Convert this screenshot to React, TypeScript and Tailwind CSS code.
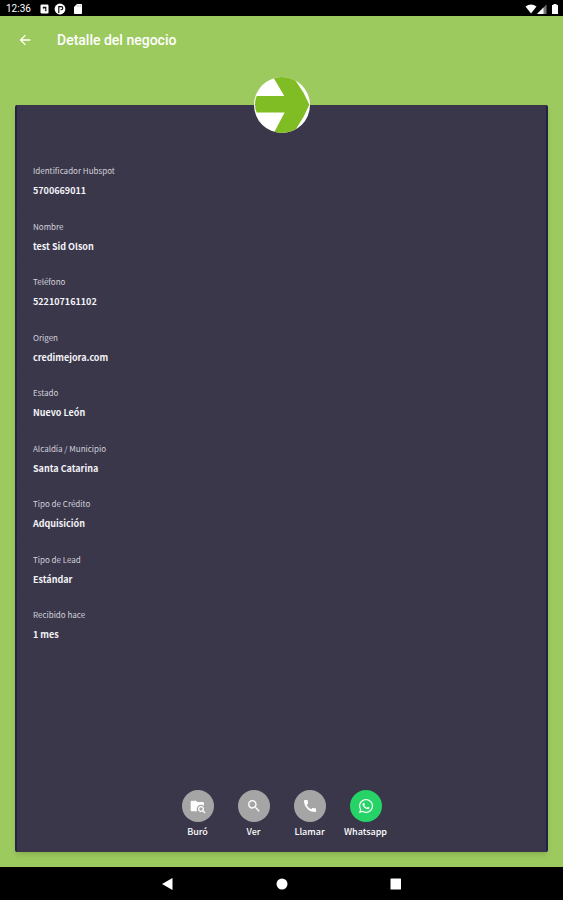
import { clsx } from "clsx";
import type { ReactNode } from "react";
import { FaWhatsapp } from "react-icons/fa";
import { MdArrowBack, MdCall, MdSearch } from "react-icons/md";

type Field = {
  label: string;
  value: string;
};

const fields: Field[] = [
  { label: "Identificador Hubspot", value: "5700669011" },
  { label: "Nombre", value: "test Sid Olson" },
  { label: "Teléfono", value: "522107161102" },
  { label: "Origen", value: "credimejora.com" },
  { label: "Estado", value: "Nuevo León" },
  { label: "Alcaldía / Municipio", value: "Santa Catarina" },
  { label: "Tipo de Crédito", value: "Adquisición" },
  { label: "Tipo de Lead", value: "Estándar" },
  { label: "Recibido hace", value: "1 mes" },
];

function StatusBar() {
  return (
    <div className="flex h-4 items-center justify-between bg-black pl-1.5 pr-1 pt-0.5 text-white">
      <div className="flex items-center">
        <span className="w-8 font-[Roboto,sans-serif] text-[10px] leading-3">
          12:36
        </span>
        <svg viewBox="0 0 10 10" className="ml-0.5 h-2.5 w-2.5" aria-hidden="true">
          <rect x="0.5" y="0.5" width="8" height="9" rx="1.2" fill="#fff" />
          <path d="M2.8 2.8h3.6v4.4H5.6L2.8 4.4z" fill="#111" />
          <circle cx="4.3" cy="5.4" r="1.1" fill="#fff" />
        </svg>
        <svg viewBox="0 0 12 12" className="ml-1 h-3 w-3" aria-hidden="true">
          <circle cx="6" cy="6" r="5.4" fill="#fff" />
          <path
            d="M4.8 10V3.6h2.4a1.6 1.6 0 0 1 0 3.2H6.6"
            fill="none"
            stroke="#000"
            strokeWidth="1.1"
          />
        </svg>
        <svg viewBox="0 0 8 10" className="ml-2 h-2.5 w-2" aria-hidden="true">
          <path d="M3 0h4.2q.8 0 .8.8v8.4q0 .8-.8.8H.8Q0 10 0 9.2V3z" fill="#fff" />
          <path d="M3.2 1.3v1.4M4.8 1.3v1.4M6.4 1.3v1.4" stroke="#888" strokeWidth=".6" />
        </svg>
      </div>
      <div className="flex items-center">
        <svg viewBox="0 0 12 10" className="h-2.5 w-3" aria-hidden="true">
          <path d="M.5 2.6Q6-1.8 11.5 2.6L6 9.5z" fill="#fff" />
        </svg>
        <svg viewBox="0 0 10 10" className="h-2.5 w-2.5" aria-hidden="true">
          <path d="M0 10 9.5.5V10z" fill="#777" />
          <path d="M0 10 6.5 3.5V10z" fill="#fff" />
        </svg>
        <svg viewBox="0 0 8 10" className="ml-1 h-2.5 w-2" aria-hidden="true">
          <path d="M2.5 0h3v1H7v9H1V1h1.5z" fill="#fff" />
        </svg>
      </div>
    </div>
  );
}

function Logo() {
  return (
    <svg viewBox="0 0 170 170" className="h-14 w-14" role="img" aria-label="Logo">
      <clipPath id="logo-circle">
        <circle cx="85" cy="85" r="85" />
      </clipPath>
      <g clipPath="url(#logo-circle)">
        <rect width="170" height="170" fill="#fff" />
        <path
          d="M58 0H122L128 14Q152 46 168 84Q152 122 130 154L122 170H60L93 108H8Q-2 84 8 58H92Z"
          fill="#80bc24"
        />
      </g>
    </svg>
  );
}

function FolderSearchIcon() {
  return (
    <svg viewBox="0 0 24 24" fill="currentColor" className="h-4 w-4" aria-hidden="true">
      <path d="M16.5,12C19,12 21,14 21,16.5C21,17.38 20.75,18.21 20.31,18.9L23.39,22L22,23.39L18.88,20.32C18.19,20.75 17.37,21 16.5,21C14,21 12,19 12,16.5C12,14 14,12 16.5,12M16.5,14A2.5,2.5 0 0,0 14,16.5A2.5,2.5 0 0,0 16.5,19A2.5,2.5 0 0,0 19,16.5A2.5,2.5 0 0,0 16.5,14M9,4L11,6H19A2,2 0 0,1 21,8V11.81C19.83,10.69 18.25,10 16.5,10A6.5,6.5 0 0,0 10,16.5C10,17.79 10.37,19 11,20H3C1.89,20 1,19.1 1,18V6C1,4.89 1.89,4 3,4H9Z" />
    </svg>
  );
}

function ActionButton({
  label,
  className,
  children,
}: {
  label: string;
  className?: string;
  children: ReactNode;
}) {
  return (
    <button type="button" className="flex w-14 flex-col items-center gap-1">
      <span
        className={clsx(
          "flex h-8 w-8 items-center justify-center rounded-full text-white",
          className ?? "bg-[#a5a5a5]"
        )}
      >
        {children}
      </span>
      <span className="whitespace-nowrap text-[9px] font-medium leading-3 text-white">
        {label}
      </span>
    </button>
  );
}

function NavigationBar() {
  return (
    <nav className="flex h-[33px] items-center justify-center gap-[98px] bg-black">
      <button type="button" aria-label="Atrás">
        <svg viewBox="0 0 16 16" className="h-4 w-4" aria-hidden="true">
          <path d="M2 8 12.5 2v12z" fill="#fff" />
        </svg>
      </button>
      <button type="button" aria-label="Inicio">
        <svg viewBox="0 0 16 16" className="h-4 w-4" aria-hidden="true">
          <circle cx="8" cy="8" r="5.5" fill="#fff" />
        </svg>
      </button>
      <button type="button" aria-label="Recientes">
        <svg viewBox="0 0 16 16" className="h-4 w-4" aria-hidden="true">
          <rect x="2.5" y="2.5" width="10.5" height="11" rx=".5" fill="#fff" />
        </svg>
      </button>
    </nav>
  );
}

export default function App() {
  return (
    <div className="flex min-h-screen flex-col bg-[#9dca5f] font-['Noto_Sans_CJK_SC',sans-serif]">
      <StatusBar />
      <header className="flex h-12 items-center gap-6 pl-[17px]">
        <button type="button" aria-label="Regresar" className="text-white">
          <MdArrowBack className="h-4 w-4" />
        </button>
        <h1 className="font-[Roboto,sans-serif] text-sm font-medium text-white">
          Detalle del negocio
        </h1>
      </header>

      <main className="flex flex-1 flex-col px-[15px] pb-[15px] pt-[41px]">
        <section className="relative flex flex-1 flex-col rounded-xs border-x-2 border-[#242049] bg-[#3a374b] pb-3.5 pt-12 shadow-md">
          <div className="absolute inset-x-0 -top-7 flex justify-center">
            <Logo />
          </div>

          <dl className="grid h-[500px] auto-rows-fr">
            {fields.map((field) => (
              <div
                key={field.label}
                className="flex flex-col gap-2 border-b border-[#383549] px-4 pt-3 leading-3 last:border-b-0"
              >
                <dt className="text-[8px] text-[#d3d2d9]">{field.label}</dt>
                <dd className="text-[9px] font-bold text-[#f3f3f6]">
                  {field.value}
                </dd>
              </div>
            ))}
          </dl>

          <div className="mt-auto flex justify-center pt-8">
            <ActionButton label="Buró">
              <FolderSearchIcon />
            </ActionButton>
            <ActionButton label="Ver">
              <MdSearch className="h-4 w-4" />
            </ActionButton>
            <ActionButton label="Llamar">
              <MdCall className="h-4 w-4" />
            </ActionButton>
            <ActionButton label="Whatsapp" className="bg-[#25d366]">
              <FaWhatsapp className="h-4 w-4" />
            </ActionButton>
          </div>
        </section>
      </main>

      <NavigationBar />
    </div>
  );
}
